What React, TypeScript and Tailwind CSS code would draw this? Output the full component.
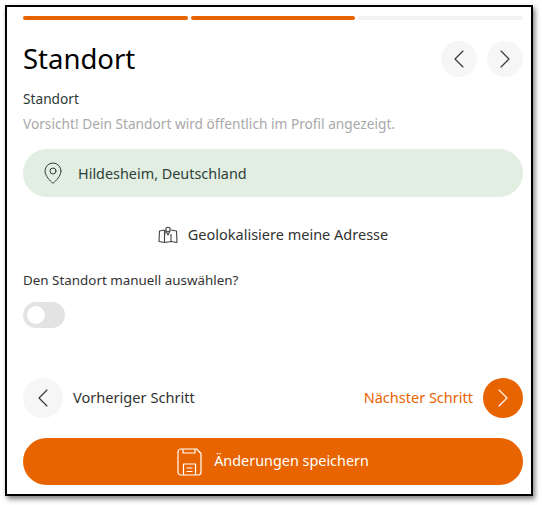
import { ChevronLeft, ChevronRight, MapPin } from 'lucide-react'

function RoundButton({ dir, size }: { dir: 'left' | 'right'; size: 'sm' | 'lg' }) {
  const Icon = dir === 'left' ? ChevronLeft : ChevronRight
  return (
    <button className={`flex items-center justify-center rounded-full bg-[#f6f6f6] text-[#333] ${size === 'sm' ? 'w-9 h-9' : 'w-10 h-10'}`}>
      <Icon size={32} strokeWidth={0.8} />
    </button>
  )
}

function MapIcon() {
  return (
    <svg width="20" height="18" viewBox="0 0 20 18" fill="none" stroke="#444" strokeWidth="1.1" strokeLinejoin="round">
      <path d="M6.5 4 L1.5 5 L1 15.5 L6.5 16.5 L13 15.5 L19 16.5 L18.5 5 L13 4" />
      <path d="M6.5 4 V16.5 M13 8 V15.5 M7 8.5 V4" />
      <circle cx="10" cy="3.5" r="2.2" />
      <path d="M8 5 L10 9 L12 5" />
    </svg>
  )
}

function SaveIcon() {
  return (
    <svg width="25" height="28" viewBox="0 0 25 28" fill="none" stroke="white" strokeWidth="1.2" strokeLinejoin="round">
      <path d="M4 1 H19.5 L24 5.5 V24 A3 3 0 0 1 21 27 H4 A3 3 0 0 1 1 24 V4 A3 3 0 0 1 4 1 Z" />
      <path d="M6 1 V5 H18 V1" />
      <path d="M6.5 27 V16 H18.5 V27" />
      <path d="M9.5 20 H15.5 M9.5 23.5 H15.5" />
    </svg>
  )
}

export default function App() {
  return (
    <div className="w-[542px] h-[505px] bg-white pt-[5px] pl-[5px]" style={{ fontFamily: '"Noto Sans", sans-serif' }}>
      <div className="w-[528px] h-[491px] border-2 border-black bg-white pl-4 pt-[9px] shadow-[2px_3px_5px_rgba(0,0,0,0.5)]">
        {/* progress */}
        <div className="flex gap-[3px] w-[500px]">
          <div className="flex-1 h-1 rounded-sm bg-[#e86400]" />
          <div className="flex-1 h-1 rounded-sm bg-[#e86400]" />
          <div className="flex-1 h-1 rounded-sm bg-[#f3f3f3]" />
        </div>

        {/* header */}
        <div className="flex items-center justify-between w-[500px] mt-[21px] h-9">
          <h1 className="text-[27.5px] text-black">Standort</h1>
          <div className="flex gap-[10px]">
            <RoundButton dir="left" size="sm" />
            <RoundButton dir="right" size="sm" />
          </div>
        </div>

        <p className="text-[13.7px] leading-5 text-[#2f3b36] mt-3">Standort</p>
        <p className="text-[13.7px] leading-5 text-[#a9a9a9] mt-[5px]">Vorsicht! Dein Standort wird öffentlich im Profil angezeigt.</p>

        {/* location */}
        <div className="flex items-center w-[500px] h-12 rounded-3xl bg-[#e2eee2] mt-[15px] pl-[18px] text-[#2f3f38]">
          <MapPin size={24} strokeWidth={1} />
          <span className="text-[14.4px] ml-[13px] pt-px">Hildesheim, Deutschland</span>
        </div>

        <div className="flex items-center justify-center gap-[10px] w-[500px] h-5 mt-[28px] text-[#333] text-[14.5px]">
          <MapIcon />
          <span>Geolokalisiere meine Adresse</span>
        </div>

        <p className="text-[13.4px] leading-5 text-[#333] mt-[25px]">Den Standort manuell auswählen?</p>

        <div className="flex items-center w-[42px] h-[26px] rounded-full bg-[#e3e3e3] mt-3 pl-1">
          <div className="w-[18px] h-[18px] rounded-full bg-white" />
        </div>

        {/* steps */}
        <div className="flex items-center justify-between w-[500px] mt-[50px]">
          <div className="flex items-center gap-[10px]">
            <RoundButton dir="left" size="lg" />
            <span className="text-[14.6px] text-[#333]">Vorheriger Schritt</span>
          </div>
          <div className="flex items-center gap-[10px]">
            <span className="text-[14.5px] text-[#e86400]">Nächster Schritt</span>
            <button className="flex items-center justify-center w-10 h-10 rounded-full bg-[#e86400] text-white">
              <ChevronRight size={32} strokeWidth={0.8} />
            </button>
          </div>
        </div>

        <button className="flex items-center justify-center gap-3 w-[500px] h-[47px] rounded-3xl bg-[#e86400] text-white text-[14.4px] mt-5">
          <SaveIcon />
          <span className="-mt-px">Änderungen speichern</span>
        </button>
      </div>
    </div>
  )
}
